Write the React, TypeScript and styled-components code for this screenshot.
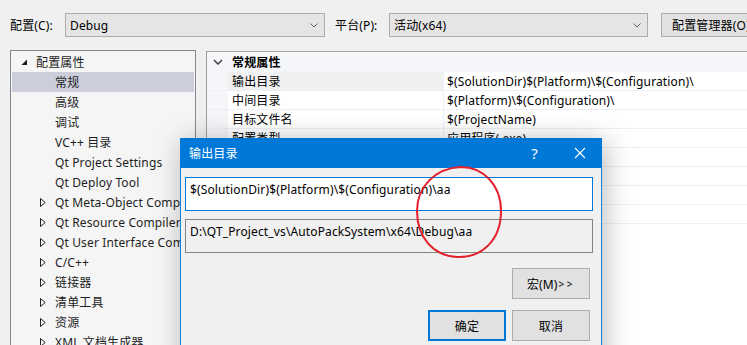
import React from "react";
import styled, { createGlobalStyle } from "styled-components";

const GlobalStyle = createGlobalStyle`
  html, body {
    margin: 0;
    padding: 0;
    background: #ffffff;
  }
  body {
    font-family: "Noto Sans", "Noto Sans CJK SC", sans-serif;
    font-size: 12px;
    letter-spacing: 0.13px;
    color: #000000;
  }
`;

type Expander = "open" | "closed" | "none";

interface TreeItem {
  label: string;
  level: number;
  expander: Expander;
  selected?: boolean;
}

const treeItems: TreeItem[] = [
  { label: "配置属性", level: 0, expander: "open" },
  { label: "常规", level: 1, expander: "none", selected: true },
  { label: "高级", level: 1, expander: "none" },
  { label: "调试", level: 1, expander: "none" },
  { label: "VC++ 目录", level: 1, expander: "none" },
  { label: "Qt Project Settings", level: 1, expander: "none" },
  { label: "Qt Deploy Tool", level: 1, expander: "none" },
  { label: "Qt Meta-Object Compiler", level: 1, expander: "closed" },
  { label: "Qt Resource Compiler", level: 1, expander: "closed" },
  { label: "Qt User Interface Compiler", level: 1, expander: "closed" },
  { label: "C/C++", level: 1, expander: "closed" },
  { label: "链接器", level: 1, expander: "closed" },
  { label: "清单工具", level: 1, expander: "closed" },
  { label: "资源", level: 1, expander: "closed" },
  { label: "XML 文档生成器", level: 1, expander: "closed" },
];

const properties = [
  { name: "输出目录", value: "$(SolutionDir)$(Platform)\\$(Configuration)\\", selected: true },
  { name: "中间目录", value: "$(Platform)\\$(Configuration)\\" },
  { name: "目标文件名", value: "$(ProjectName)" },
  { name: "配置类型", value: "应用程序(.exe)" },
  { name: "Windows SDK 版本", value: "10.0 (最新安装的版本)" },
  { name: "平台工具集", value: "Visual Studio 2019 (v142)" },
  { name: "C++ 语言标准", value: "默认(ISO C++14 标准)" },
  { name: "C 语言标准", value: "默认(旧 MSVC)" },
];

const ComboChevron = () => (
  <svg width="8" height="5" viewBox="0 0 8 5">
    <polyline points="0.5,0.5 4,4 7.5,0.5" fill="none" stroke="#606060" strokeWidth="1" />
  </svg>
);

const TreeIcon: React.FC<{ kind: Expander }> = ({ kind }) => {
  if (kind === "open") {
    return (
      <svg width="7" height="7" viewBox="0 0 7 7">
        <polygon points="6,0.5 6,6 0.5,6" fill="#1e1e1e" />
      </svg>
    );
  }
  if (kind === "closed") {
    return (
      <svg width="6" height="9" viewBox="0 0 6 9">
        <polygon points="0.5,0.5 5.2,4.5 0.5,8.5" fill="none" stroke="#1e1e1e" strokeWidth="1" />
      </svg>
    );
  }
  return null;
};

const App: React.FunctionComponent = () => {
  return (
    <Page>
      <GlobalStyle />
      <TopBar>
        <FieldLabel $width={55}>配置(C):</FieldLabel>
        <Combo $width={260}>
          <span>Debug</span>
          <ComboChevron />
        </Combo>
        <FieldLabel $width={54} style={{ marginLeft: 10 }}>
          平台(P):
        </FieldLabel>
        <Combo $width={259}>
          <span>活动(x64)</span>
          <ComboChevron />
        </Combo>
        <ManagerButton>配置管理器(O)</ManagerButton>
      </TopBar>

      <Body>
        <Tree>
          {treeItems.map((item) => (
            <TreeRow key={item.label} $level={item.level} $selected={!!item.selected}>
              <TreeIconBox>
                <TreeIcon kind={item.expander} />
              </TreeIconBox>
              <TreeLabel>{item.label}</TreeLabel>
            </TreeRow>
          ))}
        </Tree>

        <Grid>
          <GroupHeader>
            <GroupChevron>
              <svg width="10" height="6" viewBox="0 0 10 6">
                <polyline points="1,1 5,5 9,1" fill="none" stroke="#404040" strokeWidth="1.5" />
              </svg>
            </GroupChevron>
            <GroupTitle>常规属性</GroupTitle>
          </GroupHeader>
          {properties.map((p) => (
            <PropRow key={p.name}>
              <Gutter />
              <PropName $selected={!!p.selected}>{p.name}</PropName>
              <PropValue>{p.value}</PropValue>
            </PropRow>
          ))}
        </Grid>
      </Body>

      <Dialog>
        <TitleBar>
          <DialogTitle>输出目录</DialogTitle>
          <TitleButton>?</TitleButton>
          <TitleButton>
            <svg width="12" height="12" viewBox="0 0 12 12">
              <path d="M1 1 L11 11 M11 1 L1 11" stroke="#ffffff" strokeWidth="1.2" />
            </svg>
          </TitleButton>
        </TitleBar>
        <DialogBody>
          <EditBox>$(SolutionDir)$(Platform)\$(Configuration)\aa</EditBox>
          <EvaluatedBox>D:\QT_Project_vs\AutoPackSystem\x64\Debug\aa</EvaluatedBox>
          <ButtonRow $top={15}>
            <DialogButton>
              宏(M)<Arrows>&gt;&gt;</Arrows>
            </DialogButton>
          </ButtonRow>
          <ButtonRow $top={11}>
            <DialogButton $primary>确定</DialogButton>
            <DialogButton>取消</DialogButton>
          </ButtonRow>
        </DialogBody>
      </Dialog>

      <Annotation width="90" height="96" viewBox="0 0 90 96">
        <path
          d="M44 2 C68 1 86 20 86 46 C86 74 68 93 42 92 C18 91 2 72 2 46 C2 22 20 3 46 2"
          fill="none"
          stroke="#e3202b"
          strokeWidth="2"
        />
      </Annotation>
    </Page>
  );
};

const Page = styled.div`
  position: relative;
  width: 747px;
  height: 345px;
  overflow: hidden;
  background: #f0f0f0;
`;

const TopBar = styled.div`
  display: flex;
  align-items: center;
  height: 50px;
  padding-left: 10px;
  box-sizing: border-box;
`;

const FieldLabel = styled.div<{ $width: number }>`
  width: ${(p) => p.$width}px;
  flex-shrink: 0;
  white-space: nowrap;
`;

const Combo = styled.div<{ $width: number }>`
  display: flex;
  align-items: center;
  justify-content: space-between;
  width: ${(p) => p.$width}px;
  height: 24px;
  flex-shrink: 0;
  box-sizing: border-box;
  padding: 0 6px 0 4px;
  background: #e5e5e5;
  border: 1px solid #acacac;
`;

const ManagerButton = styled.div`
  display: flex;
  align-items: center;
  flex-shrink: 0;
  height: 24px;
  width: 110px;
  margin-left: 13px;
  padding-left: 10px;
  box-sizing: border-box;
  background: #e1e1e1;
  border: 1px solid #adadad;
  white-space: nowrap;
`;

const Body = styled.div`
  display: flex;
  gap: 10px;
  padding-left: 10px;
  height: 295px;
`;

const Tree = styled.div`
  width: 186px;
  flex-shrink: 0;
  box-sizing: border-box;
  padding: 1px;
  background: #f5f5f5;
  border: 1px solid #828790;
  border-bottom: none;
`;

const TreeRow = styled.div<{ $level: number; $selected: boolean }>`
  display: flex;
  align-items: center;
  height: 20px;
  padding-left: ${(p) => 9 + p.$level * 19}px;
  background: ${(p) => (p.$selected ? "#cccedb" : "transparent")};
  white-space: nowrap;
  overflow: hidden;
`;

const TreeIconBox = styled.span`
  display: flex;
  align-items: center;
  width: 15px;
  flex-shrink: 0;
`;

const TreeLabel = styled.span`
  color: #1e1e1e;
`;

const Grid = styled.div`
  flex: 1;
  margin-top: 1px;
  background: #ffffff;
  border-top: 1px solid #a0a0a0;
  border-left: 1px solid #a0a0a0;
`;

const GroupHeader = styled.div`
  display: flex;
  align-items: center;
  height: 20px;
  background: #f5f6f9;
`;

const GroupChevron = styled.span`
  display: flex;
  width: 25px;
  padding-left: 6px;
  box-sizing: border-box;
`;

const GroupTitle = styled.span`
  font-weight: 700;
`;

const PropRow = styled.div`
  display: grid;
  grid-template-columns: 21px 215px 1fr;
  height: 19px;
  box-sizing: border-box;
  border-bottom: 1px solid #eeeff5;
`;

const Gutter = styled.div`
  background: #f5f6f9;
`;

const PropName = styled.div<{ $selected: boolean }>`
  display: flex;
  align-items: center;
  padding-left: 4px;
  background: ${(p) => (p.$selected ? "#f0f0f0" : "#ffffff")};
  white-space: nowrap;
  overflow: hidden;
`;

const PropValue = styled.div`
  display: flex;
  align-items: center;
  padding-left: 3px;
  border-left: 1px solid #eeeff5;
  white-space: nowrap;
  overflow: hidden;
`;

const Dialog = styled.div`
  position: absolute;
  left: 180px;
  top: 138px;
  width: 422px;
  height: 230px;
  box-sizing: border-box;
  background: #f0f0f0;
  border: 1px solid #1883d7;
  box-shadow: 3px 3px 26px rgba(0, 0, 0, 0.28);
`;

const TitleBar = styled.div`
  display: flex;
  align-items: center;
  height: 30px;
  margin: -1px -1px 0;
  padding-left: 9px;
  background: #0078d7;
  color: #ffffff;
`;

const DialogTitle = styled.span`
  flex: 1;
`;

const TitleButton = styled.span`
  display: flex;
  align-items: center;
  justify-content: center;
  width: 45px;
  height: 30px;
  font-size: 15px;
`;

const DialogBody = styled.div`
  display: flex;
  flex-direction: column;
  padding: 9px 0 0 4px;
`;

const EditBox = styled.div`
  width: 408px;
  height: 34px;
  box-sizing: border-box;
  padding: 3px 0 0 4px;
  background: #ffffff;
  border: 1px solid #0078d7;
  white-space: nowrap;
`;

const EvaluatedBox = styled.div`
  width: 408px;
  height: 34px;
  margin-top: 8px;
  box-sizing: border-box;
  padding: 3px 0 0 4px;
  background: #f0f0f0;
  border: 1px solid #838383;
  white-space: nowrap;
`;

const ButtonRow = styled.div<{ $top: number }>`
  display: flex;
  justify-content: flex-end;
  gap: 6px;
  width: 405px;
  margin-top: ${(p) => p.$top}px;
`;

const DialogButton = styled.div<{ $primary?: boolean }>`
  display: flex;
  align-items: center;
  justify-content: center;
  width: 78px;
  height: 31px;
  box-sizing: border-box;
  background: #e1e1e1;
  border: ${(p) => (p.$primary ? "2px solid #0078d7" : "1px solid #adadad")};
`;

const Arrows = styled.span`
  font-size: 10px;
  letter-spacing: 2.5px;
  margin-left: 1px;
`;

const Annotation = styled.svg`
  position: absolute;
  left: 415px;
  top: 165px;
`;

export default App;
